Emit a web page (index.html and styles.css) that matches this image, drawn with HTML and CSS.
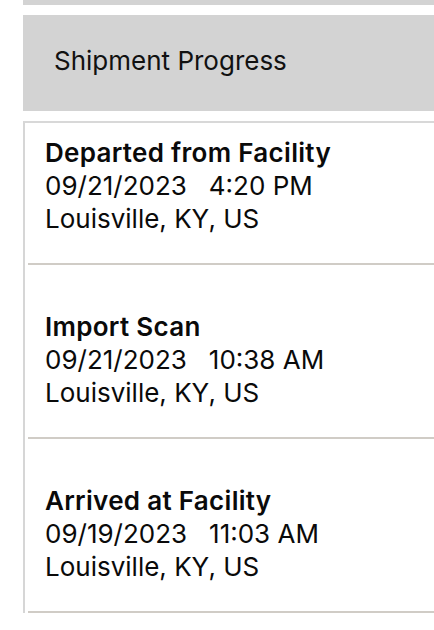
FILE: index.html
```html
<!DOCTYPE html>
<html lang="en">
<head>
<meta charset="utf-8">
<title>Shipment Progress</title>
<link rel="stylesheet" href="styles.css">
</head>
<body>
<div class="screen">
  <div class="top-bar"></div>
  <div class="section-header">Shipment Progress</div>
  <div class="progress-card">
    <div class="event event-first">
      <div class="event-title">Departed from Facility</div>
      <div class="event-line">09/21/2023   4:20 PM</div>
      <div class="event-line">Louisville, KY, US</div>
    </div>
    <div class="event">
      <div class="event-title">Import Scan</div>
      <div class="event-line">09/21/2023   10:38 AM</div>
      <div class="event-line">Louisville, KY, US</div>
    </div>
    <div class="event">
      <div class="event-title">Arrived at Facility</div>
      <div class="event-line">09/19/2023   11:03 AM</div>
      <div class="event-line">Louisville, KY, US</div>
    </div>
  </div>
</div>
</body>
</html>
```

FILE: styles.css
```css
html, body {
  margin: 0;
  padding: 0;
  background: #ffffff;
}

body {
  font-family: "Inter", "Liberation Sans", sans-serif;
  color: #0a0a0a;
  overflow: hidden;
}

.screen {
  display: flex;
  flex-direction: column;
  padding-left: 23px;
  height: 630px;
  overflow: hidden;
}

.top-bar {
  height: 5px;
  background: #d3d3d3;
  flex: none;
}

.section-header {
  flex: none;
  margin-top: 10px;
  height: 90px;
  padding-bottom: 6px;
  background: #d3d3d3;
  display: flex;
  align-items: center;
  padding-left: 31px;
  font-size: 26px;
  color: #111;
}

.progress-card {
  margin-top: 10px;
  border-top: 2px solid #d8d8d8;
  border-left: 2px solid #d6d6d6;
  padding-left: 3px;
}

.event {
  padding: 45px 0 28px 17px;
  border-bottom: 2px solid #d0ccc6;
}

.event-first {
  padding-top: 13px;
}

.event-title,
.event-line {
  font-size: 26px;
  line-height: 33px;
  white-space: pre;
}

.event-title {
  font-weight: 600;
  letter-spacing: 0.3px;
}
```
